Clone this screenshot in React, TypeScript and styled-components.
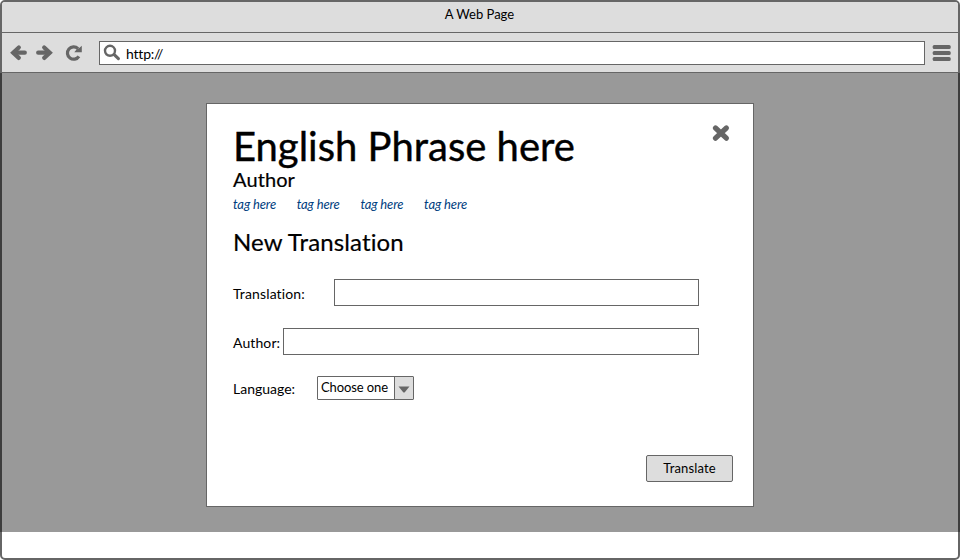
import React from "react";
import styled, { createGlobalStyle } from "styled-components";

const GlobalStyle = createGlobalStyle`
  *, *::before, *::after { box-sizing: border-box; }
  body {
    margin: 0;
    background: #fff;
    color: #000;
    font-family: Lato, "Liberation Sans", sans-serif;
    font-size: 14px;
    font-variant-ligatures: none;
  }
`;

const BrowserWindow = styled.div`
  display: flex;
  flex-direction: column;
  width: 960px;
  height: 560px;
  border: 2px solid #666;
  border-radius: 5px;
  background: #fff;
`;

const TitleBar = styled.header`
  height: 31px;
  border-bottom: 1px solid #666;
  border-radius: 3px 3px 0 0;
  background: #ddd;
  font-size: 13px;
  line-height: 25px;
  text-align: center;
  padding-right: 1px;
`;

const Toolbar = styled.nav`
  display: flex;
  align-items: center;
  height: 40px;
  padding: 0 7px 0 9px;
  border-bottom: 1px solid #666;
  background: #ddd;
`;

const Glyph = styled.svg<{ $gap?: number }>`
  display: block;
  flex: none;
  margin-right: ${(p) => p.$gap ?? 0}px;
  overflow: visible;
`;

const AddressBar = styled.div`
  display: flex;
  align-items: center;
  flex: 1;
  height: 24px;
  margin-right: 8px;
  padding-left: 4px;
  border: 1px solid #666;
  background: #fff;
  line-height: 24px;
`;

const Address = styled.span`
  padding-top: 2px;
  letter-spacing: -0.2px;
`;

const Backdrop = styled.main`
  display: flex;
  justify-content: center;
  align-items: flex-start;
  height: 459px;
  margin: 0 -2px;
  padding-top: 30px;
  background: rgba(0, 0, 0, 0.4);
`;

const Dialog = styled.section`
  display: flex;
  flex-direction: column;
  width: 548px;
  height: 404px;
  padding: 18px 20px 24px 26px;
  border: 1px solid #666;
  background: #fff;
`;

const DialogTop = styled.div`
  display: flex;
  justify-content: space-between;
  height: 45px;
`;

const Phrase = styled.h1`
  margin: 3px 0 0;
  font-size: 40px;
  font-weight: 400;
  line-height: 42px;
  -webkit-text-stroke: 0.4px #000;
`;

const CloseButton = styled.button`
  display: block;
  width: 18px;
  height: 18px;
  margin: 2px 3px 0 0;
  padding: 0;
  border: 0;
  background: none;
`;

const Byline = styled.p`
  margin: 0 0 1px;
  font-size: 20px;
  letter-spacing: 0.1px;
  line-height: 24px;
  -webkit-text-stroke: 0.2px #000;
`;

const Tags = styled.div`
  display: grid;
  grid-template-columns: repeat(4, 63.7px);
  height: 24px;
  color: #004080;
  font-size: 13px;
  font-style: italic;
  letter-spacing: -0.12px;
  line-height: 24px;
`;

const Heading = styled.h2`
  margin: 11px 0 22px;
  font-size: 24px;
  font-weight: 400;
  letter-spacing: 0.13px;
  line-height: 30px;
  -webkit-text-stroke: 0.2px #000;
`;

const Row = styled.div<{ $after?: number }>`
  display: flex;
  align-items: flex-start;
  height: 27px;
  margin-bottom: ${(p) => p.$after ?? 0}px;
  padding-right: 34px;
`;

const Label = styled.label<{ $width: number; $drop?: number; $spacing?: number }>`
  width: ${(p) => p.$width}px;
  flex: none;
  padding-top: ${(p) => p.$drop ?? 2}px;
  font-size: 14px;
  letter-spacing: ${(p) => p.$spacing ?? 0}px;
  line-height: 26px;
`;

const TextInput = styled.input`
  flex: 1;
  min-width: 0;
  height: 27px;
  border: 1px solid #666;
  background: #fff;
  font: inherit;
  outline: none;
`;

const Select = styled.div`
  display: flex;
  width: 97px;
  height: 24px;
  border: 1px solid #666;
  border-radius: 1px;
  font-size: 13px;
  letter-spacing: -0.1px;
  line-height: 20px;
`;

const Choice = styled.span`
  flex: 1;
  padding-left: 3px;
  white-space: nowrap;
`;

const Arrow = styled.span`
  display: flex;
  align-items: center;
  justify-content: center;
  width: 19px;
  padding-top: 2px;
  border-left: 1px solid #666;
  background: #ddd;
`;

const SubmitButton = styled.button`
  align-self: flex-end;
  width: 87px;
  height: 27px;
  margin-top: auto;
  padding: 0;
  border: 1px solid #666;
  border-radius: 2px;
  background: #ddd;
  color: #000;
  font-family: inherit;
  font-size: 13px;
  letter-spacing: 0.15px;
  line-height: 25px;
`;

const tags = ["tag here", "tag here", "tag here", "tag here"];

export default function App() {
  return (
    <>
      <GlobalStyle />
      <BrowserWindow>
        <TitleBar>A Web Page</TitleBar>
        <Toolbar>
          <Glyph $gap={9} width="16" height="16" viewBox="0 0 16 16" fill="none" stroke="#666" strokeWidth="4.2">
            <path d="M3 7.7H13.8" strokeLinecap="round" />
            <path d="M7.8 2.5L2.2 7.7L7.8 12.9" strokeLinecap="round" />
          </Glyph>
          <Glyph $gap={13} width="16" height="16" viewBox="0 0 16 16" fill="none" stroke="#666" strokeWidth="4.2">
            <path d="M13 7.7H2.2" strokeLinecap="round" />
            <path d="M8.2 2.5L13.8 7.7L8.2 12.9" strokeLinecap="round" />
          </Glyph>
          <Glyph $gap={17} width="17" height="16" viewBox="0 0 17 16">
            <path d="M13.9 11.3A6.2 6.2 0 1 1 13 3.6" fill="none" stroke="#666" strokeWidth="3.2" />
            <path d="M16.8 0.8V7.3H9.3L11.5 4.4L14.5 2.8Z" fill="#666" />
          </Glyph>
          <AddressBar>
            <Glyph $gap={6} width="16" height="16" viewBox="0 0 16 16" fill="none" stroke="#666">
              <circle cx="6" cy="5.8" r="5" strokeWidth="2.4" />
              <path d="M10.2 9.6L14.4 13.6" strokeWidth="3.1" strokeLinecap="round" />
            </Glyph>
            <Address>http://</Address>
          </AddressBar>
          <Glyph width="18" height="16" viewBox="0 0 18 16" fill="#666">
            <rect x="-0.3" y="0" width="18" height="4" rx="1.5" />
            <rect x="-0.3" y="6" width="18" height="4" rx="1.5" />
            <rect x="-0.3" y="12" width="18" height="4" rx="1.5" />
          </Glyph>
        </Toolbar>
        <Backdrop>
          <Dialog>
            <DialogTop>
              <Phrase>English Phrase here</Phrase>
              <CloseButton aria-label="Close">
                <Glyph width="18" height="18" viewBox="0 0 18 18" stroke="#666" strokeWidth="5.2" strokeLinecap="round">
                  <path d="M3.5 4L14.4 14.2M14.4 4L3.5 14.2" />
                </Glyph>
              </CloseButton>
            </DialogTop>
            <Byline>Author</Byline>
            <Tags>
              {tags.map((tag, i) => (
                <span key={i}>{tag}</span>
              ))}
            </Tags>
            <Heading>New Translation</Heading>
            <Row $after={22}>
              <Label $width={101} $spacing={0.13} htmlFor="translation">Translation:</Label>
              <TextInput id="translation" />
            </Row>
            <Row $after={21}>
              <Label $width={50} $spacing={0.1} htmlFor="author">Author:</Label>
              <TextInput id="author" />
            </Row>
            <Row>
              <Label $width={84} $drop={0}>Language:</Label>
              <Select>
                <Choice>Choose one</Choice>
                <Arrow>
                  <Glyph width="12" height="7" viewBox="0 0 12 7" fill="#666">
                    <path d="M0.5 0.5H11.5L7 6Q6 7 5 6Z" />
                  </Glyph>
                </Arrow>
              </Select>
            </Row>
            <SubmitButton>Translate</SubmitButton>
          </Dialog>
        </Backdrop>
      </BrowserWindow>
    </>
  );
}
